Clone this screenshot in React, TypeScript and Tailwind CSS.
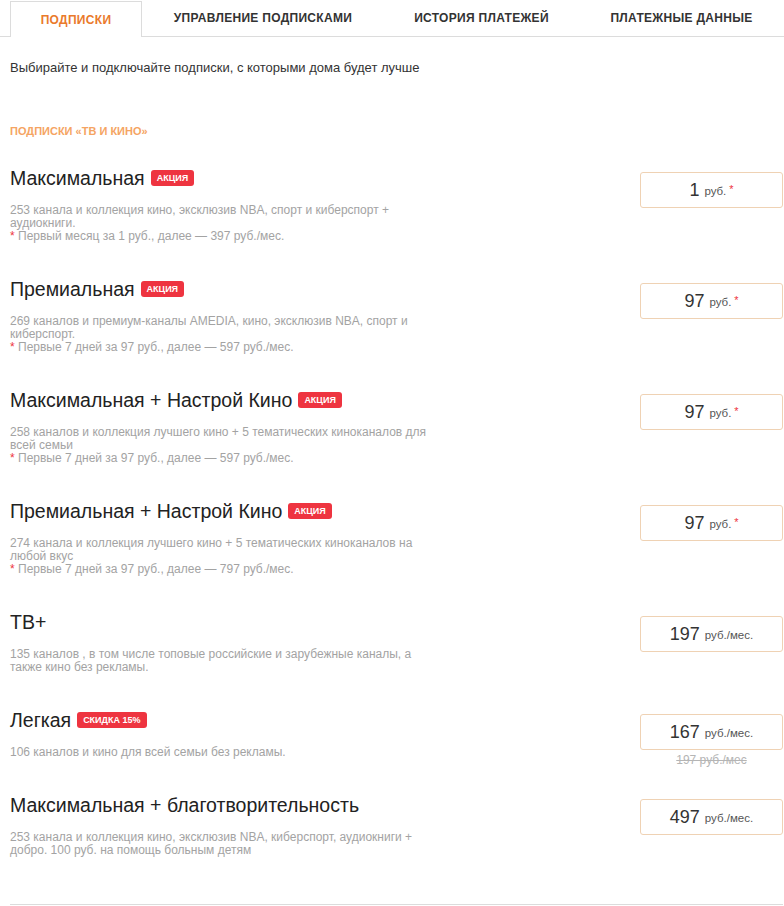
type Plan = {
  title: string;
  badge?: string;
  lines: string[];
  note?: string;
  price: string;
  unit: string;
  star?: boolean;
  old?: string;
};

const plans: Plan[] = [
  {
    title: "Максимальная",
    badge: "Акция",
    lines: ["253 канала и коллекция кино, эксклюзив NBA, спорт и киберспорт +", "аудиокниги."],
    note: "Первый месяц за 1 руб., далее — 397 руб./мес.",
    price: "1",
    unit: "руб.",
    star: true,
  },
  {
    title: "Премиальная",
    badge: "Акция",
    lines: ["269 каналов и премиум-каналы AMEDIA, кино, эксклюзив NBA, спорт и", "киберспорт."],
    note: "Первые 7 дней за 97 руб., далее — 597 руб./мес.",
    price: "97",
    unit: "руб.",
    star: true,
  },
  {
    title: "Максимальная + Настрой Кино",
    badge: "Акция",
    lines: ["258 каналов и коллекция лучшего кино + 5 тематических киноканалов для", "всей семьи"],
    note: "Первые 7 дней за 97 руб., далее — 597 руб./мес.",
    price: "97",
    unit: "руб.",
    star: true,
  },
  {
    title: "Премиальная + Настрой Кино",
    badge: "Акция",
    lines: ["274 канала и коллекция лучшего кино + 5 тематических киноканалов на", "любой вкус"],
    note: "Первые 7 дней за 97 руб., далее — 797 руб./мес.",
    price: "97",
    unit: "руб.",
    star: true,
  },
  {
    title: "ТВ+",
    lines: ["135 каналов , в том числе топовые российские и зарубежные каналы, а", "также кино без рекламы."],
    price: "197",
    unit: "руб./мес.",
  },
  {
    title: "Легкая",
    badge: "Скидка 15%",
    lines: ["106 каналов и кино для всей семьи без рекламы."],
    price: "167",
    unit: "руб./мес.",
    old: "197 руб./мес",
  },
  {
    title: "Максимальная + благотворительность",
    lines: ["253 канала и коллекция кино, эксклюзив NBA, киберспорт, аудиокниги +", "добро. 100 руб. на помощь больным детям"],
    price: "497",
    unit: "руб./мес.",
  },
];

const tabs = [
  { label: "Подписки", w: "w-[132px]", active: true },
  { label: "Управление подписками", w: "w-[242px]" },
  { label: "История платежей", w: "w-[195px]" },
  { label: "Платежные данные", w: "flex-1" },
];

function PlanRow({ plan }: { plan: Plan }) {
  return (
    <div className="flex justify-between items-start">
      <div className="pb-[34px]">
        <div className="flex items-center h-6">
          <span className="text-[19.5px] leading-6 text-[#222]">{plan.title}</span>
          {plan.badge && (
            <span className="ml-[6px] h-4 px-[6px] rounded-[3px] bg-[#ee3440] text-white text-[9px] font-bold uppercase leading-4">
              {plan.badge}
            </span>
          )}
        </div>
        <div className="mt-[14px] text-[12px] leading-[13px] text-[#a3a3a3] whitespace-nowrap">
          {plan.lines.map((l) => (
            <div key={l}>{l}</div>
          ))}
          {plan.note && (
            <div>
              <span className="text-[#ee3440]">*</span> {plan.note}
            </div>
          )}
        </div>
      </div>
      <div className="mt-[6px] flex flex-col items-center">
        <div className="w-[143px] h-9 border border-[#efd2b4] rounded-[3px] flex items-center justify-center text-[#333]">
          <span className="text-[18px] font-light">{plan.price}</span>
          <span className="ml-[5px] text-[11.5px] text-[#555] mt-[3px]">{plan.unit}</span>
          {plan.star && <span className="ml-[3px] text-[11px] text-[#ee3440] -mt-[2px]">*</span>}
        </div>
        {plan.old && (
          <div className="mt-[3px] text-[12px] leading-[14px] text-[#b5b5b5] line-through">{plan.old}</div>
        )}
      </div>
    </div>
  );
}

export default function App() {
  return (
    <div className="w-[784px] min-h-[906px] bg-white font-['Liberation_Sans',Arial,sans-serif]">
      <div className="flex pl-[10px] border-b border-[#dcdcdc] h-[37px]">
        {tabs.map((t) => (
          <div
            key={t.label}
            className={
              t.active
                ? `${t.w} mt-px -mb-px bg-white border border-b-0 border-[#dcdcdc] flex items-center justify-center text-[12px] font-bold uppercase text-[#ea7a2c] tracking-[0.3px]`
                : `${t.w} flex items-center justify-center text-[12px] font-bold uppercase text-[#333] tracking-[0.3px]`
            }
          >
            {t.label}
          </div>
        ))}
      </div>

      <div className="pl-[10px] pr-px">
        <p className="mt-[23px] text-[13px] leading-4 text-[#333]">
          Выбирайте и подключайте подписки, с которыми дома будет лучше
        </p>
        <h2 className="mt-[48px] text-[11px] leading-[14px] font-bold uppercase text-[#f5a463]">
          Подписки «ТВ и кино»
        </h2>
        <div className="mt-[28px]">
          {plans.map((p) => (
            <PlanRow key={p.title} plan={p} />
          ))}
        </div>
        <div className="mt-[13px] border-t border-[#dcdcdc]" />
      </div>
    </div>
  );
}
